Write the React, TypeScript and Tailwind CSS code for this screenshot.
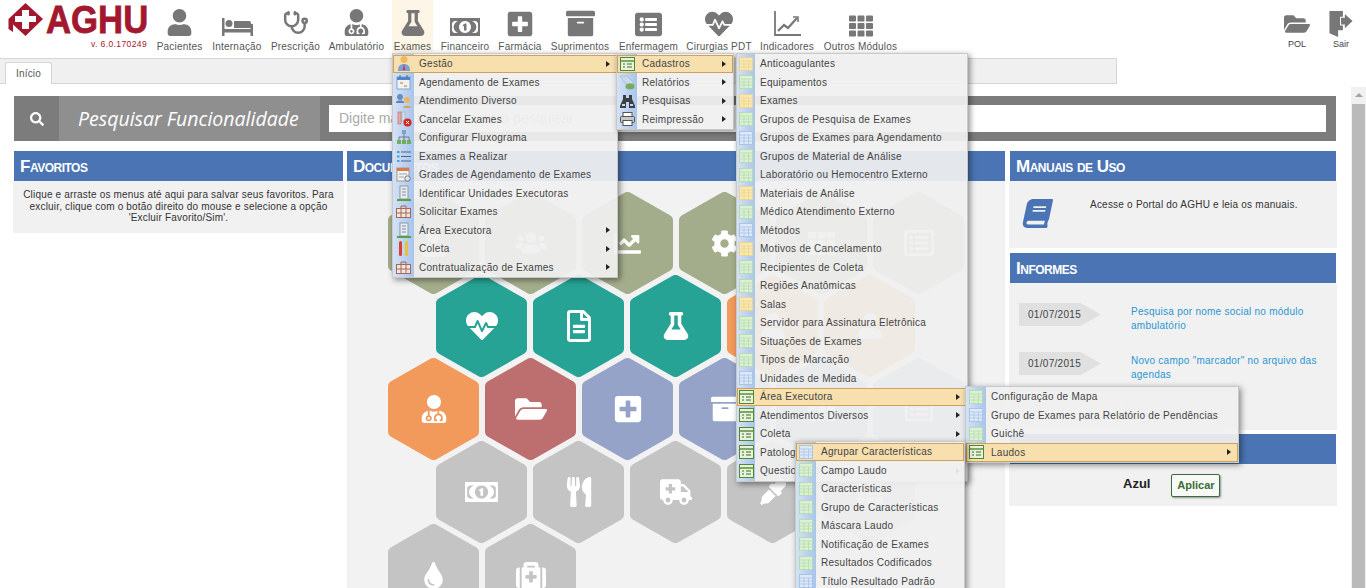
import type { ReactNode } from "react";
import {
  FaArchive, FaAmbulance, FaBook, FaChartLine, FaCog, FaEyeDropper, FaFlask, FaFolderOpen,
  FaHeartbeat, FaListAlt, FaMedkit, FaPlusSquare, FaRegFileAlt, FaRegListAlt, FaSearch,
  FaTh, FaTint, FaUser, FaUserMd, FaUsers, FaUtensils,
} from "react-icons/fa";
import { Stethoscope } from "lucide-react";

const font = "font-['Liberation_Sans',Arial,sans-serif]";

function BedIcon() {
  return (
    <svg width="31" height="18" viewBox="0 0 31 18" fill="#777">
      <rect x="0" y="0" width="2.500" height="18" />
      <rect x="28.500" y="6" width="2.500" height="12" />
      <circle cx="7" cy="5.500" r="3.500" />
      <path d="M12 3h15a2 2 0 0 1 2 2v5H12Z" />
      <rect x="0" y="11" width="31" height="3.500" />
    </svg>
  );
}

function ChartIcon() {
  return (
    <svg width="27" height="25" viewBox="0 0 27 25" fill="none" stroke="#777">
      <path d="M1 0v24h26" strokeWidth="1.800" />
      <path d="M4 20l6-6 4 3 9-10" strokeWidth="2.200" />
      <path d="M19 6h5v5" strokeWidth="1.500" />
    </svg>
  );
}

function MoneyIcon({ w, h }: { w: number; h: number }) {
  return (
    <svg width={w} height={h} viewBox="0 0 30 18" fill="currentColor">
      <path fillRule="evenodd" d="M0 0h30v18H0ZM4 3 2 5v8l2 2h4a9 7 0 0 1 0-12ZM26 3h-4a9 7 0 0 1 0 12h4l2-2V5ZM15 3a6 6 0 1 0 .01 0ZM15 5.500h1.500v7H14V8h-1.200V7Z" />
    </svg>
  );
}

const navItems = [
  { label: "Pacientes", w: "w-[45px]", icon: <FaUser size={27} /> },
  { label: "Internação", w: "w-[50px]", icon: <BedIcon /> },
  { label: "Prescrição", w: "w-[47px]", icon: <Stethoscope size={26} strokeWidth={2.300} /> },
  { label: "Ambulatório", w: "w-[55px]", icon: <FaUserMd size={27} /> },
  { label: "Exames", w: "w-[37px]", icon: <FaFlask size={26} />, active: true },
  { label: "Financeiro", w: "w-[48px]", icon: <MoneyIcon w={30} h={18} /> },
  { label: "Farmácia", w: "w-[42px]", icon: <FaPlusSquare size={28} className="-mb-[2px]" /> },
  { label: "Suprimentos", w: "w-[58px]", icon: <FaArchive size={29} className="-mb-[2px]" /> },
  { label: "Enfermagem", w: "w-[59px]", icon: <FaListAlt size={27} className="-mb-[2px]" /> },
  { label: "Cirurgias PDT", w: "w-[62px]", icon: <FaHeartbeat size={28} className="-mb-[2px]" /> },
  { label: "Indicadores", w: "w-[54px]", icon: <ChartIcon /> },
  { label: "Outros Módulos", w: "w-[73px]", icon: <FaTh size={24} className="-mb-[2px]" /> },
];

function Logo() {
  return (
    <div className="w-[157px] h-full shrink-0 flex flex-col items-start">
      <div className="flex items-start pl-[7px] pt-[2px]">
        <svg width="37" height="36" viewBox="0 0 37 36" className="shrink-0">
          <path d="M18.5 1 36 17 18.5 34 6 22.5V30L1.5 27V17Z" fill="#a3182e" />
          <path d="M15 8h7v6h7v6h-7v7h-7v-7H8v-6h7Z" fill="#fff" />
        </svg>
        <span className="text-[39px] leading-[36px] font-black text-[#a3182e] [-webkit-text-stroke:0.8px_#a3182e] origin-left scale-x-[0.89] ml-[2px] whitespace-nowrap">AGHU</span>
      </div>
      <div className="ml-[91px] mt-[1px] text-[8.5px] leading-[10px] tracking-[0.4px] text-[#a3182e] whitespace-nowrap">v. 6.0.170249</div>
    </div>
  );
}

function NavItem({ label, w, icon, active }: { label: string; w: string; icon: ReactNode; active?: boolean }) {
  return (
    <div className={`relative flex flex-col items-center h-[52px] ${w} ${active ? "before:content-[''] before:absolute before:-inset-x-[2px] before:inset-y-0 before:bg-[#fdf5e6]" : ""}`}>
      <div className="relative h-[36px] mb-[5px] flex items-end justify-center text-[#777]">{icon}</div>
      <div className="relative text-[10px] leading-[11px] tracking-[0.2px] text-[#555] whitespace-nowrap">{label}</div>
    </div>
  );
}

function Header() {
  return (
    <div className="flex h-[58px]">
      <Logo />
      <div className="flex gap-[10px]">
        {navItems.map((n) => (
          <NavItem key={n.label} {...n} />
        ))}
      </div>
      <div className="ml-auto flex gap-[20px] pr-[13px] pt-[11px]">
        <div className="flex flex-col items-center w-[24px]">
          <FaFolderOpen size={26} color="#777" />
          <span className="text-[9px] leading-[10px] mt-[2px] text-[#444]">POL</span>
        </div>
        <div className="flex flex-col items-center w-[24px]">
          <svg width="24" height="26" viewBox="0 0 24 27" fill="#777">
            <path d="M0 0H14V6H11V15H14V20H9V27L0 23Z" />
            <path d="M12 7h4V3l8 7.500-8 7.500v-4h-4Z" />
          </svg>
          <span className="text-[9px] leading-[10px] mt-[2px] text-[#444]">Sair</span>
        </div>
      </div>
    </div>
  );
}

function Tabs() {
  return (
    <div className="w-[1117px] h-[26px] bg-[#f0f0f0] border-y border-r border-[#d6d6d6] flex items-end pl-[5px]">
      <div className="w-[47px] h-[22px] -mb-[1px] bg-white border border-b-0 border-[#d6d6d6] rounded-t-[3px] flex items-center justify-center text-[10px] tracking-[0.2px] text-[#555]">Início</div>
    </div>
  );
}

function SearchBar() {
  return (
    <div className="ml-[14px] w-[1322px] h-[45px] bg-[#7c7c7c] flex items-center">
      <div className="w-[45px] flex justify-center text-white"><FaSearch size={14} /></div>
      <div className="w-[261px] h-full bg-[#8f8f8f] flex items-center pl-[19px] font-['Open_Sans',sans-serif] italic text-[19.500px] text-white whitespace-nowrap">Pesquisar Funcionalidade</div>
      <div className="ml-[9px] w-[997px] h-[27px] bg-white flex items-center pl-[10px] text-[14px] text-[#aaa] whitespace-nowrap">Digite mais de 3 letras para pesquisar</div>
    </div>
  );
}

function PanelTitle({ children }: { children: ReactNode }) {
  return (
    <div className="h-[30px] bg-[#4a74b4] pl-[6px] pt-[1px] flex items-center text-white font-bold text-[17px] tracking-[-0.5px] [font-variant:small-caps] whitespace-nowrap overflow-hidden">{children}</div>
  );
}

const hexColors: Record<string, string> = {
  olive: "#a4ad8b", teal: "#26a395", orange: "#f29a5c", red: "#bd6f6f", blue: "#94a3c7", gray: "#c4c4c4",
};

function Hex({ color, icon }: { color: string; icon: ReactNode }) {
  return (
    <div className="w-[91px] h-[102px] shrink-0 grid place-items-center text-white">
      <svg width="91" height="102" viewBox="0 0 91 102" className="col-start-1 row-start-1">
        <polygon points="45.5,6 85,28.5 85,73.5 45.5,96 6,73.5 6,28.5" fill={hexColors[color]} stroke={hexColors[color]} strokeWidth="12" strokeLinejoin="round" />
      </svg>
      <div className="col-start-1 row-start-1">{icon}</div>
    </div>
  );
}

const hexRows = [
  { ml: "ml-[41px]", mt: "mt-[11px]", items: [
    { c: "olive", i: <FaUser size={27} /> }, { c: "olive", i: <FaUsers size={30} /> }, { c: "olive", i: <FaChartLine size={27} /> },
    { c: "olive", i: <FaCog size={27} /> }, { c: "olive", i: <FaTh size={27} /> }, { c: "olive", i: <FaRegListAlt size={30} /> },
  ] },
  { ml: "ml-[89px]", mt: "-mt-[19px]", items: [
    { c: "teal", i: <FaHeartbeat size={32} /> }, { c: "teal", i: <FaRegFileAlt size={32} /> }, { c: "teal", i: <FaFlask size={28} /> },
    { c: "orange", i: <FaUser size={26} /> }, { c: "orange", i: <FaUser size={26} /> },
  ] },
  { ml: "ml-[41px]", mt: "-mt-[19px]", items: [
    { c: "orange", i: <FaUserMd size={28} /> }, { c: "red", i: <FaFolderOpen size={32} /> }, { c: "blue", i: <FaPlusSquare size={30} /> },
    { c: "blue", i: <FaArchive size={28} /> }, { c: "blue", i: <FaTh size={27} /> }, { c: "blue", i: <FaRegListAlt size={28} /> },
  ] },
  { ml: "ml-[89px]", mt: "-mt-[19px]", items: [
    { c: "gray", i: <MoneyIcon w={33} h={22} /> }, { c: "gray", i: <FaUtensils size={30} /> }, { c: "gray", i: <FaAmbulance size={32} /> },
    { c: "gray", i: <FaEyeDropper size={26} /> }, { c: "gray", i: <FaTh size={26} /> },
  ] },
  { ml: "ml-[41px]", mt: "-mt-[19px]", items: [
    { c: "gray", i: <FaTint size={27} /> }, { c: "gray", i: <FaMedkit size={30} /> },
  ] },
];

function Favoritos() {
  return (
    <div>
      <div className="mx-[1px]"><PanelTitle>Favoritos</PanelTitle></div>
      <div className="bg-[#f1f1f1] h-[52px] pt-[8px] px-[4px] text-center text-[10px] leading-[11.5px] tracking-[0.18px] text-[#333]">
        Clique e arraste os menus até aqui para salvar seus favoritos. Para excluir, clique com o botão direito do mouse e selecione a opção 'Excluir Favorito/Sim'.
      </div>
    </div>
  );
}

function Documentos() {
  return (
    <div className="h-[437px] overflow-hidden bg-[#f2f2f2]">
      <PanelTitle>Documentos</PanelTitle>
      {hexRows.map((row, r) => (
        <div key={r} className={`flex gap-[6px] ${row.ml} ${row.mt}`}>
          {row.items.map((h, i) => (
            <Hex key={i} color={h.c} icon={h.i} />
          ))}
        </div>
      ))}
    </div>
  );
}

function InformeRow({ text }: { text: string }) {
  return (
    <div className="flex h-[29px] mb-[20px]">
      <div className="w-[82px] h-[23px] bg-[#e0e0e0] [clip-path:polygon(0_0,75%_0,100%_50%,75%_100%,0_100%)] mt-[1px] pl-[9px] flex items-center text-[10px] tracking-[0.3px] text-[#444] shrink-0">01/07/2015</div>
      <div className="ml-[30px] w-[190px] text-[10px] leading-[14px] tracking-[0.25px] text-[#2a96d2] mt-[3px]">{text}</div>
    </div>
  );
}

function Lateral() {
  return (
    <div>
      <PanelTitle>Manuais de Uso</PanelTitle>
      <div className="-mx-[1px] bg-[#f1f1f1] h-[67px] flex pl-[14px] pt-[18px] items-start">
        <FaBook size={29} color="#4a74b4" className="shrink-0 -skew-x-12" />
        <span className="ml-[38px] text-[10px] leading-[12px] tracking-[0.22px] text-[#333] whitespace-nowrap">Acesse o Portal do AGHU e leia os manuais.</span>
      </div>
      <div className="h-[5px]" />
      <PanelTitle>Informes</PanelTitle>
      <div className="-mx-[1px] bg-[#f1f1f1] h-[147px] pl-[10px] pt-[19px]">
        <InformeRow text="Pesquisa por nome social no módulo ambulatório" />
        <InformeRow text={'Novo campo "marcador" no arquivo das agendas'} />
        <div className="ml-[108px] w-[93px] h-[25px] border border-[#ddd] flex items-center justify-center text-[10px] text-[#bbb] whitespace-nowrap">Outros Informes</div>
      </div>
      <div className="h-[4px]" />
      <PanelTitle>Tema</PanelTitle>
      <div className="-mx-[1px] bg-[#f1f1f1] h-[42px] flex items-center pl-[114px]">
        <span className="text-[13px] font-bold text-[#222] -mt-[3px]">Azul</span>
        <button className="ml-[21px] w-[49px] h-[23px] border border-[#3d6b3d] rounded-[2px] bg-[#f6f9f4] text-[11px] font-bold text-[#3a6b3a] shadow-[1px_1px_2px_rgba(0,0,0,.4)]">Aplicar</button>
      </div>
    </div>
  );
}

function Scrollbar() {
  return (
    <div className="w-[15px] h-[501px] bg-[#f1f1f1] flex flex-col items-center pt-[6px]">
      <div className="w-0 h-0 border-x-[4px] border-x-transparent border-b-[4px] border-b-[#a3a3a3]" />
      <div className="mt-[7px] w-[13px] flex-1 bg-[#bababa]" />
    </div>
  );
}

/* small 16px menu icons */
function MenuIcon({ kind }: { kind: string }) {
  if (kind === "yellow" || kind === "green" || kind === "blue") {
    const c = { yellow: ["#f8e8b4", "#eed48a"], green: ["#dcf0d4", "#b4dcb0"], blue: ["#dde8f8", "#aac4e6"] }[kind]!;
    return (
      <svg width="14" height="14" viewBox="0 0 14 14">
        <rect x=".5" y=".5" width="13" height="13" fill={c[0]} stroke={c[1]} />
        <path d="M.5 4h13M.5 7h13M.5 10h13M5 4v9.5M9.5 4v9.5" stroke={c[1]} strokeWidth=".8" fill="none" />
      </svg>
    );
  }
  if (kind === "form") {
    return (
      <svg width="15" height="14" viewBox="0 0 15 14">
        <rect x=".5" y=".5" width="14" height="13" fill="#e9f3dc" stroke="#4f8a33" />
        <path d="M1 4h13" stroke="#4f8a33" strokeWidth="1.4" />
        <path d="M3 7h2M7 7h5M3 10h2M7 10h5" stroke="#3b6f28" />
      </svg>
    );
  }
  if (kind === "user") {
    return (
      <svg width="16" height="17" viewBox="0 0 16 17">
        <circle cx="8" cy="4.5" r="3.5" fill="#f0b95c" />
        <path d="M2 16c0-5 2-7 6-7s6 2 6 7Z" fill="#7b9fd8" />
        <path d="M8 9l1.3 6H6.7Z" fill="#d3382c" />
      </svg>
    );
  }
  if (kind === "calendar") {
    return (
      <svg width="15" height="16" viewBox="0 0 15 16">
        <rect x="1" y="3" width="13" height="12" fill="#eef3fa" stroke="#8aa5c9" />
        <rect x="1" y="3" width="13" height="3" fill="#4f88c6" />
        <path d="M4 1v3M11 1v3" stroke="#466a96" />
        <path d="M4 9h3M8 12h3" stroke="#e0a03c" strokeWidth="1.5" />
      </svg>
    );
  }
  if (kind === "people") {
    return (
      <svg width="16" height="16" viewBox="0 0 16 16">
        <circle cx="4" cy="4" r="3" fill="#6d8cc2" />
        <path d="M0 9c1-2 7-2 8 0v1H0Z" fill="#5e7fb8" />
        <circle cx="11" cy="7" r="3" fill="#edb65c" />
        <path d="M7 15c0-3 8-3 8 0Z" fill="#d9a24e" />
      </svg>
    );
  }
  if (kind === "cancel") {
    return (
      <svg width="16" height="16" viewBox="0 0 16 16">
        <rect x="2" y="1" width="3" height="12" fill="#e8a7a7" stroke="#b66" strokeWidth=".6" />
        <rect x="6" y="1" width="3" height="9" fill="#d7e0ee" stroke="#8aa" strokeWidth=".6" />
        <circle cx="11.5" cy="11.5" r="4" fill="#d8261f" />
        <path d="M10 10l3 3M13 10l-3 3" stroke="#fff" />
      </svg>
    );
  }
  if (kind === "flow") {
    return (
      <svg width="16" height="15" viewBox="0 0 16 15">
        <rect x="6" y="0" width="4" height="4" fill="#7ea0cc" />
        <path d="M8 4v3M3 10V7h10v3M8 7v3" stroke="#667" fill="none" strokeWidth=".8" />
        <rect x="1" y="10" width="4" height="4" fill="#6fae5a" />
        <rect x="6" y="10" width="4" height="4" fill="#6fae5a" />
        <rect x="11" y="10" width="4" height="4" fill="#6fae5a" />
      </svg>
    );
  }
  if (kind === "list") {
    return (
      <svg width="14" height="13" viewBox="0 0 14 13">
        <path d="M4 2h10M4 6.500h10M4 11h10" stroke="#47688f" />
        <path d="M0 2h2.500M0 6.500h2.500M0 11h2.500" stroke="#3fa5d6" strokeWidth="2" />
      </svg>
    );
  }
  if (kind === "grade") {
    return (
      <svg width="16" height="16" viewBox="0 0 16 16">
        <rect x="1" y="1" width="12" height="13" fill="#f7f3ea" stroke="#999" />
        <rect x="1" y="1" width="12" height="3" fill="#d97b4b" />
        <path d="M3 7h8M3 10h5" stroke="#8aa6c7" />
        <circle cx="11.500" cy="11.500" r="2.700" fill="#d8e7f5" stroke="#777" />
      </svg>
    );
  }
  if (kind === "unit") {
    return (
      <svg width="14" height="16" viewBox="0 0 14 16">
        <rect x="3" y="1" width="8" height="13" fill="#e8edf2" stroke="#8a9aa8" />
        <path d="M5 4h4M5 7h4M5 10h4" stroke="#7b8c9c" />
        <path d="M0 15h14" stroke="#58a14a" strokeWidth="2" />
      </svg>
    );
  }
  if (kind === "box") {
    return (
      <svg width="15" height="13" viewBox="0 0 15 13">
        <rect x=".5" y="3.500" width="14" height="9" fill="#f3e7dc" stroke="#a0695a" />
        <path d="M5 1h5v2.500M5 1v2.500M5 3.500v9M10 3.500v9M.5 8h14" stroke="#a0695a" fill="none" />
      </svg>
    );
  }
  if (kind === "tubes") {
    return (
      <svg width="14" height="15" viewBox="0 0 14 15">
        <rect x="2" y="0" width="3" height="15" rx="1.500" fill="#d84035" />
        <rect x="8" y="0" width="3" height="15" rx="1.500" fill="#e7c234" />
      </svg>
    );
  }
  if (kind === "report") {
    return (
      <svg width="16" height="15" viewBox="0 0 16 15">
        <path d="M1 1l7 0 6 6v2H7Z" fill="#c9d8ea" stroke="#9db2c9" strokeWidth=".6" />
        <ellipse cx="11" cy="11.500" rx="4.500" ry="3" fill="#74ae5d" />
      </svg>
    );
  }
  if (kind === "binoculars") {
    return (
      <svg width="15" height="14" viewBox="0 0 15 14" fill="#3a3f44">
        <path d="M3 1h3v3h3V1h3v4l3 7v2H9V8H6v6H0v-2l3-7Z" />
        <path d="M2 10h3v2H2ZM10 10h3v2h-3Z" fill="#cfd5da" />
      </svg>
    );
  }
  return (
    <svg width="15" height="14" viewBox="0 0 15 14">
      <rect x="3" y="0.500" width="9" height="5" fill="#fff" stroke="#555" />
      <rect x=".5" y="4.500" width="14" height="6" rx="1" fill="#c4c8cc" stroke="#555" />
      <rect x="3" y="8.500" width="9" height="5" fill="#fff" stroke="#555" />
    </svg>
  );
}

type Item = { t: string; k: string; sub?: boolean; on?: boolean };

const K = (t: string, k: string, sub?: boolean, on?: boolean): Item => ({ t, k, sub, on });

const menuExames = [
  K("Gestão", "user", true, true), K("Agendamento de Exames", "calendar"), K("Atendimento Diverso", "people"),
  K("Cancelar Exames", "cancel"), K("Configurar Fluxograma", "flow"), K("Exames a Realizar", "list"),
  K("Grades de Agendamento de Exames", "grade"), K("Identificar Unidades Executoras", "unit"), K("Solicitar Exames", "box"),
  K("Área Executora", "unit", true), K("Coleta", "tubes", true), K("Contratualização de Exames", "box", true),
];
const menuGestao = [
  K("Cadastros", "form", true, true), K("Relatórios", "report", true), K("Pesquisas", "binoculars", true), K("Reimpressão", "print", true),
];
const menuCadastros = [
  K("Anticoagulantes", "yellow"), K("Equipamentos", "green"), K("Exames", "yellow"), K("Grupos de Pesquisa de Exames", "green"),
  K("Grupos de Exames para Agendamento", "blue"), K("Grupos de Material de Análise", "green"), K("Laboratório ou Hemocentro Externo", "green"),
  K("Materiais de Análise", "yellow"), K("Médico Atendimento Externo", "green"), K("Métodos", "blue"), K("Motivos de Cancelamento", "yellow"),
  K("Recipientes de Coleta", "green"), K("Regiões Anatômicas", "green"), K("Salas", "yellow"), K("Servidor para Assinatura Eletrônica", "green"),
  K("Situações de Exames", "green"), K("Tipos de Marcação", "green"), K("Unidades de Medida", "blue"),
  K("Área Executora", "form", true, true), K("Atendimentos Diversos", "form", true), K("Coleta", "form", true),
  K("Patologia", "form", true), K("Questionário", "form", true),
];
const menuArea = [
  K("Configuração de Mapa", "green"), K("Grupo de Exames para Relatório de Pendências", "blue"), K("Guichê", "green"), K("Laudos", "form", true, true),
];
const menuLaudos = [
  K("Agrupar Características", "blue", false, true), K("Campo Laudo", "green"), K("Características", "green"), K("Grupo de Características", "green"),
  K("Máscara Laudo", "green"), K("Notificação de Exames", "green"), K("Resultados Codificados", "green"), K("Título Resultado Padrão", "blue"),
];

function Menu({ items, pos, col }: { items: Item[]; pos: string; col: string }) {
  return (
    <div className={`absolute ${pos} bg-[rgba(240,240,240,0.93)] border border-[#c9c9c9] shadow-[2px_2px_6px_rgba(0,0,0,0.45)] pt-[0.5px] pb-[0.5px] text-[10px] tracking-[0.27px] text-[#444]`}>
      <div className={`absolute left-0 top-0 bottom-0 ${col} bg-gradient-to-r from-[#d5e2f5] to-[#a9c4ec]`} />
      {items.map((it) => (
        <div
          key={it.t}
          className={`relative h-[18.5px] flex items-center pr-[7px] whitespace-nowrap ${it.on ? "bg-[#f7e0ae] outline outline-1 -outline-offset-1 outline-[#cba35e]" : ""}`}
        >
          <div className={`${col} shrink-0 flex justify-center`}><MenuIcon kind={it.k} /></div>
          <span className="ml-[5px]">{it.t}</span>
          {it.sub && (
            <div className="ml-auto w-0 h-0 border-y-[3.5px] border-y-transparent border-l-[4px] border-l-[#222]" />
          )}
        </div>
      ))}
    </div>
  );
}

export default function App() {
  return (
    <div className={`relative w-[1366px] h-[588px] overflow-hidden bg-white ${font}`}>
      <Header />
      <Tabs />
      <div className="flex mt-[3px]">
        <div className="w-[1351px] shrink-0 pt-[9px]">
          <SearchBar />
          <div className="mt-[10px] ml-[13px] grid grid-cols-[331px_658px_328px] gap-x-[3px]">
            <Favoritos />
            <Documentos />
            <div className="ml-[2px]"><Lateral /></div>
          </div>
        </div>
        <Scrollbar />
      </div>

      <Menu items={menuExames} pos="left-[392px] top-[53px] w-[226px]" col="w-[21px]" />
      <Menu items={menuGestao} pos="left-[616px] top-[53px] w-[118px]" col="w-[20px]" />
      <Menu items={menuCadastros} pos="left-[736px] top-[53px] w-[232px]" col="w-[18px]" />
      <Menu items={menuArea} pos="left-[965px] top-[386px] w-[274px]" col="w-[20px]" />
      <Menu items={menuLaudos} pos="left-[795px] top-[441px] w-[170px]" col="w-[20px]" />
    </div>
  );
}
